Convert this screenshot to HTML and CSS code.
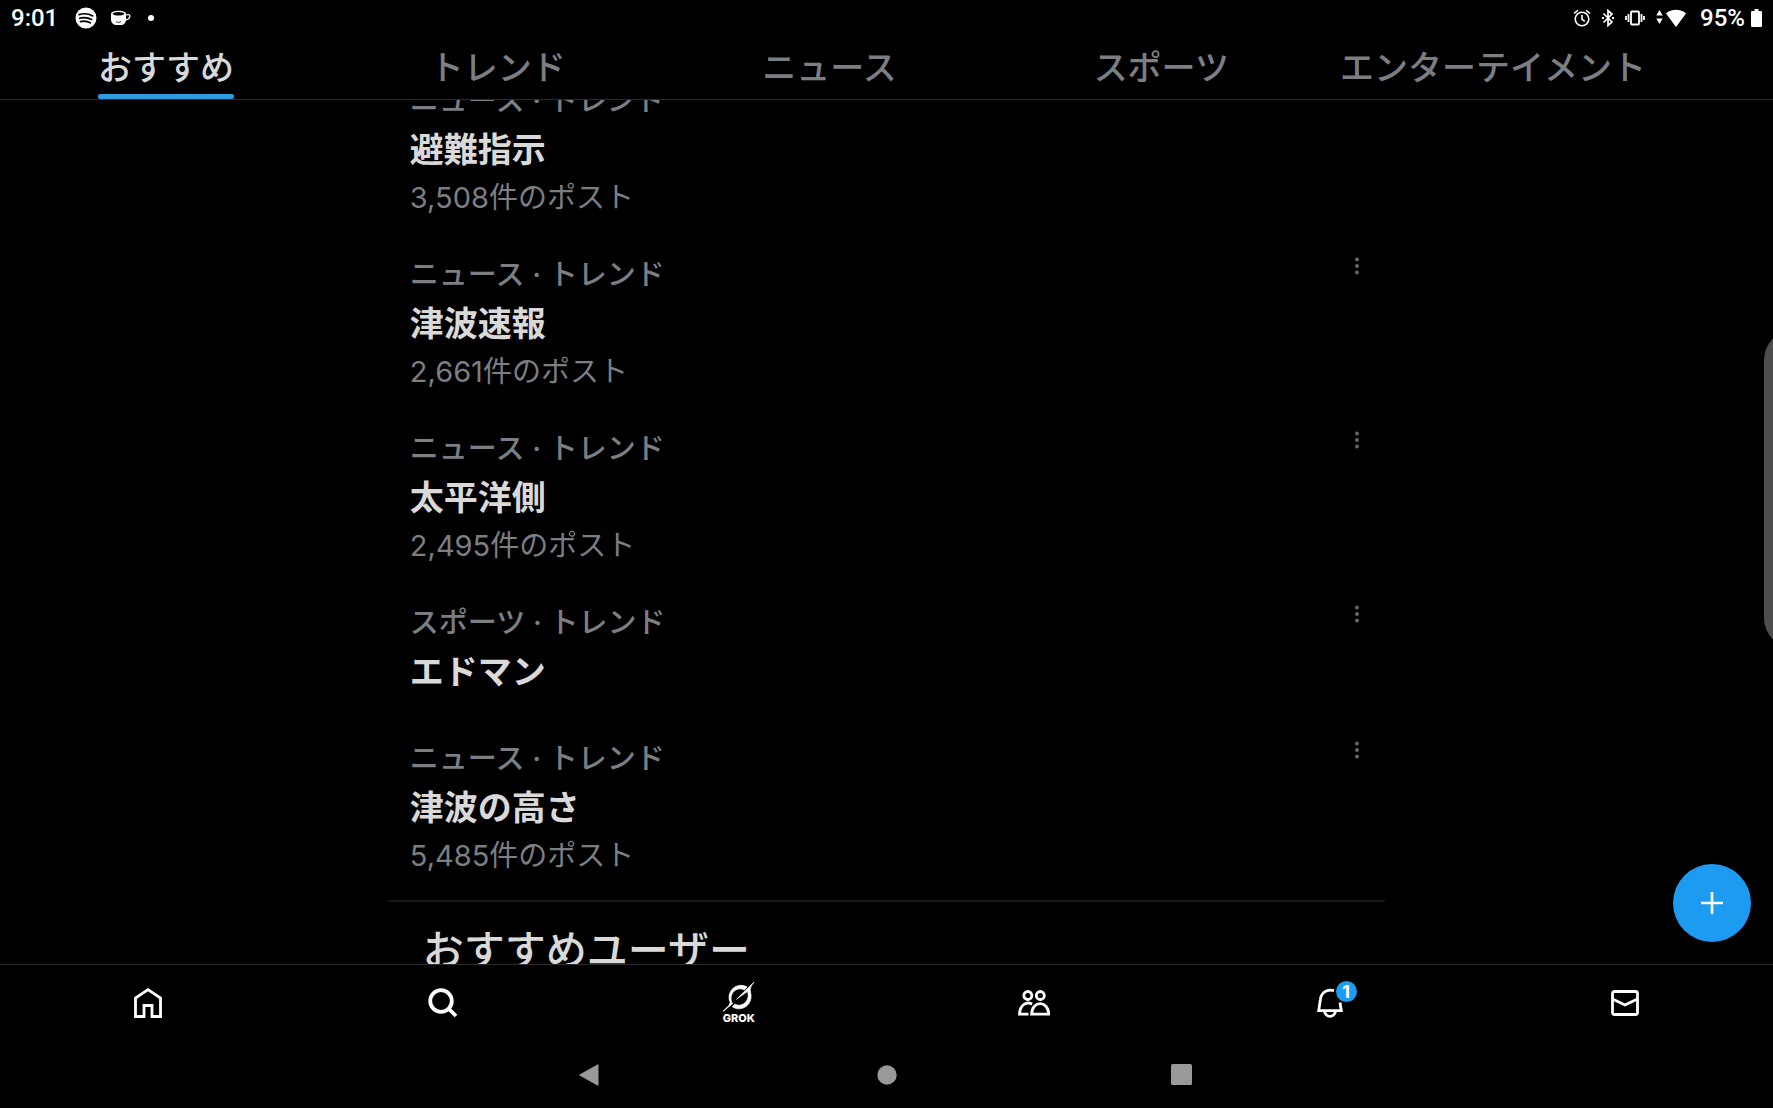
FILE: index.html
```html
<!DOCTYPE html>
<html lang="ja">
<head>
  <meta charset="UTF-8">
  <meta name="viewport" content="width=device-width, initial-scale=1">
  <title>おすすめ</title>
  <link rel="stylesheet" href="styles.css">
</head>
<body>

  <div class="statusbar">
    <div class="status-left">
      <span class="clock">9:01</span>
      <svg class="spotify" width="22" height="22" viewBox="0 0 22 22">
        <circle cx="11" cy="11" r="10.5" fill="#fff"/>
        <path d="M4 7.6c4.500-1.400 9.500-1 13.800 1.300M4.800 11.200c4-1.100 8-.7 11.800 1.200M5.500 14.600c3.400-.8 6.700-.4 9.800 1.200" fill="none" stroke="#000" stroke-width="1.700" stroke-linecap="round"/>
      </svg>
      <svg class="cup" width="20" height="16" viewBox="0 0 20 16">
        <path d="M0 4C0-.3 15-.3 15 4v5c0 4-2.500 6-5 6H6C2.500 15 0 13 0 9z" fill="#fff"/>
        <ellipse cx="7.500" cy="3.700" rx="5.800" ry="1.700" fill="#000"/>
        <path d="M14.500 5c4-1.200 5 .2 4 2.600-.7 1.500-2 2.400-4 2.400" fill="none" stroke="#fff" stroke-width="1.300"/>
        <path d="M5 11.500c1.500 1.200 3.500 1.200 5 0" fill="none" stroke="#000" stroke-width=".8"/>
      </svg>
      <span class="dot"></span>
    </div>
    <div class="status-right">
      <svg width="18" height="18" viewBox="0 0 18 18" fill="none" stroke="#fff" stroke-width="1.600">
        <circle cx="9" cy="10" r="6.800"/>
        <path d="M9 6v4.300l2.800 2M1 4.500L4.800 1.300M17 4.500l-3.800-3.200"/>
      </svg>
      <svg width="12" height="18" viewBox="0 0 12 18" fill="none" stroke="#fff" stroke-width="1.700">
        <path d="M1.500 4.500l8.500 8.500-4 3.500v-15L10 5l-8.500 8.500"/>
        <path d="M0 9h2M10 9h2" stroke-width="1.800"/>
      </svg>
      <svg width="20" height="16" viewBox="0 0 20 16" fill="none" stroke="#fff" stroke-width="1.800">
        <rect x="6" y="1.500" width="8" height="13" rx="1"/>
        <path d="M3.500 4v8M1 6v4M16.500 4v8M19 6v4"/>
      </svg>
      <svg class="wifi" width="30" height="18" viewBox="0 0 30 18" fill="#fff">
        <path d="M3.500 1l3.200 5.500H.3zM3.500 15L.3 9.500h6.400zM20 18L10 4.500c5-5 15-5 20 0z"/>
      </svg>
      <span class="battery-level">95%</span>
      <svg width="11" height="18" viewBox="0 0 11 18" fill="#fff">
        <path d="M3.500 0h4v2H10a1 1 0 0 1 1 1v14a1 1 0 0 1-1 1H1a1 1 0 0 1-1-1V3a1 1 0 0 1 1-1h2.500z"/>
      </svg>
    </div>
  </div>

  <nav class="tabs">
    <a class="tab active" href="#">おすすめ</a>
    <a class="tab" href="#">トレンド</a>
    <a class="tab" href="#">ニュース</a>
    <a class="tab" href="#">スポーツ</a>
    <a class="tab" href="#">エンターテイメント</a>
  </nav>

  <main class="content">
    <div class="feed">
      <article class="trend">
        <div class="trend-text">
          <p class="context">ニュース · トレンド</p>
          <h2>避難指示</h2>
          <p class="count">3,508件のポスト</p>
        </div>
      </article>
      <article class="trend">
        <div class="trend-text">
          <p class="context">ニュース · トレンド</p>
          <h2>津波速報</h2>
          <p class="count">2,661件のポスト</p>
        </div>
        <button class="more" aria-label="その他"><svg width="6" height="18" viewBox="0 0 6 18"><circle cx="3" cy="2.500" r="2"/><circle cx="3" cy="9" r="2"/><circle cx="3" cy="15.500" r="2"/></svg></button>
      </article>
      <article class="trend">
        <div class="trend-text">
          <p class="context">ニュース · トレンド</p>
          <h2>太平洋側</h2>
          <p class="count">2,495件のポスト</p>
        </div>
        <button class="more" aria-label="その他"><svg width="6" height="18" viewBox="0 0 6 18"><circle cx="3" cy="2.500" r="2"/><circle cx="3" cy="9" r="2"/><circle cx="3" cy="15.500" r="2"/></svg></button>
      </article>
      <article class="trend">
        <div class="trend-text">
          <p class="context">スポーツ · トレンド</p>
          <h2>エドマン</h2>
        </div>
        <button class="more" aria-label="その他"><svg width="6" height="18" viewBox="0 0 6 18"><circle cx="3" cy="2.500" r="2"/><circle cx="3" cy="9" r="2"/><circle cx="3" cy="15.500" r="2"/></svg></button>
      </article>
      <article class="trend">
        <div class="trend-text">
          <p class="context">ニュース · トレンド</p>
          <h2>津波の高さ</h2>
          <p class="count">5,485件のポスト</p>
        </div>
        <button class="more" aria-label="その他"><svg width="6" height="18" viewBox="0 0 6 18"><circle cx="3" cy="2.500" r="2"/><circle cx="3" cy="9" r="2"/><circle cx="3" cy="15.500" r="2"/></svg></button>
      </article>
      <h1 class="users-title">おすすめユーザー</h1>
    </div>

    <div class="edge-handle"></div>
    <button class="fab" aria-label="ポストする">
      <svg width="22" height="22" viewBox="0 0 22 22" stroke="#fff" stroke-width="2.600"><path d="M11 0v22M0 11h22"/></svg>
    </button>
  </main>

  <nav class="bottom-nav">
    <a href="#" aria-label="ホーム">
      <svg width="28" height="30" viewBox="0 0 28 30" fill="none" stroke="#fff" stroke-width="2.800">
        <path d="M1.500 28.500V10L14 1.700 26.500 10v18.500H18V17.500h-8v11z"/>
      </svg>
    </a>
    <a href="#" aria-label="検索">
      <svg width="30" height="30" viewBox="0 0 30 30" fill="none" stroke="#fff" stroke-width="3.800">
        <circle cx="13" cy="13" r="10.800"/><path d="M20.500 20.500l7.500 7.500"/>
      </svg>
    </a>
    <a class="grok" href="#">
      <svg width="32" height="30" viewBox="0 0 32 30">
        <path d="M24 4.900A12 12 0 0 0 7.200 20.500L6 23.500 0 29.300l9.500-7.500c-1.800-3.200-2-6.500-.8-9.300C11 7.500 16.500 5.200 21.300 7.900z" fill="#fff" stroke="#fff" stroke-width=".8"/>
        <path d="M31 0L13.500 17.200l11-7.700c1.100 3.100.9 6.600-1 9.600-2.600 4-7.700 5.200-11.700 3L9.300 24.800c5.200 3.700 12.700 2.200 16.500-3.100 2.500-3.500 2.900-7.700 1.700-11.700-.8-3.300.5-6 3.500-10z" fill="#fff" stroke="#fff" stroke-width=".6"/>
      </svg>
      <span>GROK</span>
    </a>
    <a href="#" aria-label="コミュニティ">
      <svg width="32" height="26" viewBox="0 0 32 26" fill="none" stroke="#fff" stroke-width="2.800">
        <circle cx="9.800" cy="5.500" r="4"/><circle cx="22.300" cy="5.500" r="4"/>
        <path d="M14.200 13.900C8.500 11.300 2 14.500 1.500 24.200H10.500M13.600 24.200c.4-14.200 16.700-14.200 17.100 0z"/>
      </svg>
    </a>
    <a href="#" aria-label="通知">
      <span class="bell">
        <svg width="26" height="30" viewBox="0 0 26 30" fill="none" stroke="#fff" stroke-width="2.800">
          <path d="M17 2.600C9.500 .5 4 5 3.400 11.500L1.700 22.700h22.600L23 14.500M7.500 23c.8 7.200 10.200 7.200 11 0"/>
        </svg>
        <span class="badge">1</span>
      </span>
    </a>
    <a href="#" aria-label="メッセージ">
      <svg width="28" height="26" viewBox="0 0 28 26" fill="none" stroke="#fff" stroke-width="2.800">
        <rect x="1.500" y="1.500" width="25" height="23" rx="2"/><path d="M1.500 9L14 15l12.500-6"/>
      </svg>
    </a>
  </nav>

  <div class="system-nav">
    <button aria-label="戻る"><svg width="24" height="22" viewBox="0 0 24 22"><path d="M18.500.4Q19.500 0 19.500 1v20q0 1-1 .6L.6 11.600q-.8-.6 0-1.200z"/></svg></button>
    <button aria-label="ホーム画面"><svg width="20" height="20" viewBox="0 0 20 20"><circle cx="10" cy="10" r="9.700"/></svg></button>
    <button aria-label="履歴"><svg width="21" height="21" viewBox="0 0 21 21"><rect width="21" height="21" rx="1.500"/></svg></button>
  </div>

</body>
</html>
```
FILE: styles.css
```css
* { margin:0; padding:0; box-sizing:border-box; }
body {
  height:100vh; display:flex; flex-direction:column; overflow:hidden;
  font-family:Inter, "Noto Sans CJK JP", sans-serif;
  background:#000; color:#d9d9d9;
}
a { color:inherit; text-decoration:none; }
button { border:none; background:none; cursor:pointer; }
svg { display:block; flex:none; }

/* status bar */
.statusbar {
  display:flex; justify-content:space-between; align-items:center;
  height:36px; padding:0 11px;
  font-family:Roboto, sans-serif; font-size:24px; font-weight:500; color:#fff;
}
.status-left, .status-right { display:flex; align-items:center; }
.spotify { margin-left:17px; }
.cup { margin-left:14px; }
.dot { width:6px; height:6px; margin-left:17px; border-radius:50%; background:#fff; }
.status-right { gap:11px; }
.wifi { margin-right:3px; }
.battery-level { margin-right:-5px; }

/* tabs */
.tabs {
  display:grid; grid-template-columns:repeat(5, 1fr);
  height:64px; padding-right:114px; border-bottom:1px solid #2b2b2b;
}
.tab {
  justify-self:center; white-space:nowrap;
  display:flex; flex-direction:column;
  font-size:34px; font-weight:500; line-height:64px; color:#7b7e82;
}
.tab.active { color:#d9d9d9; }
.tab.active::after {
  content:""; height:5px; margin-top:-6px;
  border-radius:2px; background:#2d9be0;
}

/* feed */
.content { flex:1; min-height:0; position:relative; overflow:hidden; }
.feed { width:56.25%; margin:-38px auto 0; }
.trend {
  display:flex; justify-content:space-between; align-items:flex-start;
  padding:19px 22px;
}
.context { font-size:29px; font-weight:500; line-height:40px; color:#7b7e82; }
.trend h2 { font-size:34px; font-weight:700; line-height:58px; }
.count { font-size:29px; line-height:38px; color:#7b7e82; }
.more { padding:2px 3px; fill:#666; }
.users-title {
  margin-top:6px; padding:18px 35px; border-top:2px solid #181818;
  font-size:41px; font-weight:500; line-height:60px;
}
.edge-handle {
  position:absolute; top:230px; right:-21px;
  width:30px; height:318px; border-radius:30px 0 0 30px; background:#4d4d4d;
}
.fab {
  position:absolute; right:22px; bottom:22px;
  display:flex; align-items:center; justify-content:center;
  width:78px; height:78px; border-radius:50%; background:#1d9bf0;
}

/* bottom navigation */
.bottom-nav {
  display:grid; grid-template-columns:repeat(6, 1fr);
  height:77px; padding-bottom:1px; border-top:1px solid #2b2b2b;
}
.bottom-nav a { display:flex; align-items:center; justify-content:center; color:#fff; }
.bottom-nav .grok { flex-direction:column; }
.grok span { font-size:11px; font-weight:800; line-height:12px; }
.bell { position:relative; }
.badge {
  position:absolute; top:-7px; left:19px;
  width:21px; height:21px; border-radius:50%; background:#1d9bf0;
  color:#fff; font-size:18px; font-weight:700; line-height:21px; text-align:center;
}

.system-nav {
  display:flex; justify-content:center; height:67px;
}
.system-nav button {
  display:flex; align-items:center; justify-content:center;
  width:16.66%; fill:#999;
}
```
